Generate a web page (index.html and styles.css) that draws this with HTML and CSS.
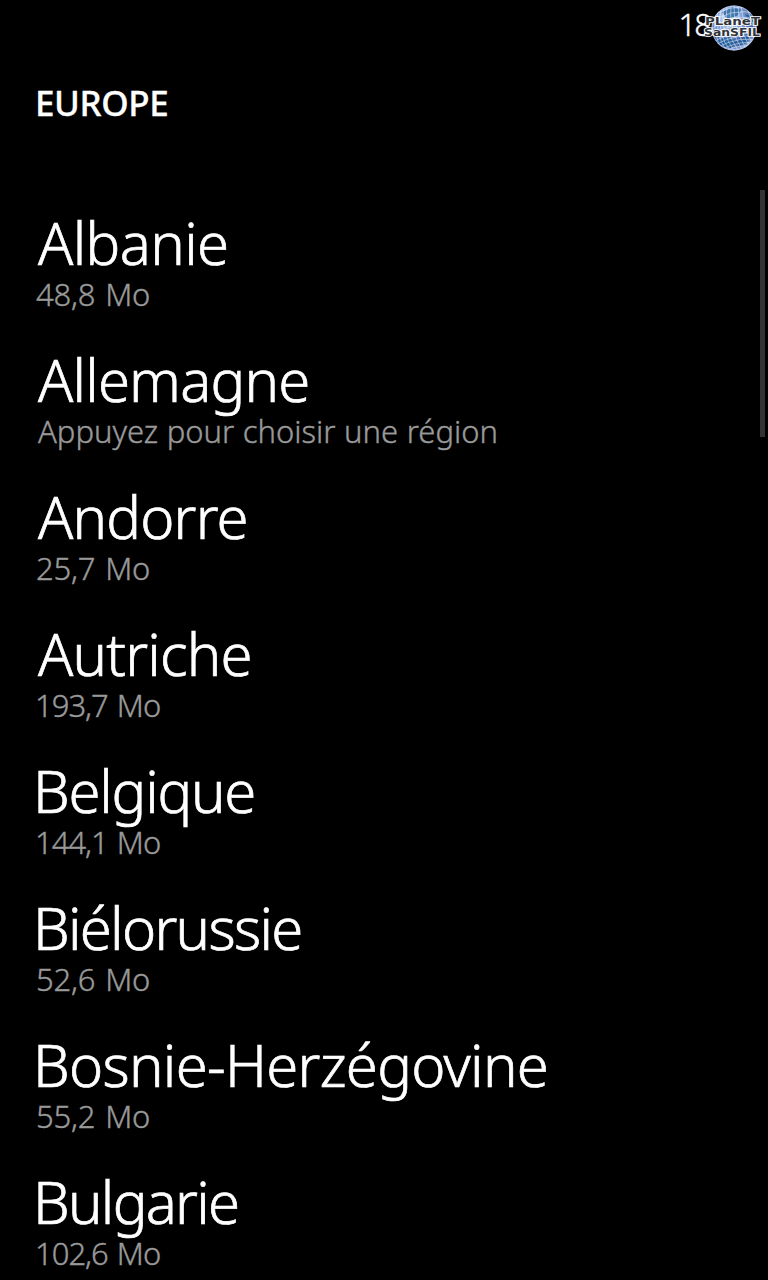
FILE: index.html
```html
<!DOCTYPE html>
<html lang="fr">
<head>
<meta charset="utf-8">
<title>Europe</title>
<link rel="stylesheet" href="styles.css">
</head>

<body>
<div class="status">
  <span class="clock">18</span>
  <svg class="logo" width="64" height="52" viewBox="0 0 64 52">
    <defs>
      <radialGradient id="globe" cx="38%" cy="28%" r="75%">
        <stop offset="0" stop-color="#dbe8fb"/>
        <stop offset="0.4" stop-color="#7f9fd6"/>
        <stop offset="0.8" stop-color="#34589a"/>
        <stop offset="1" stop-color="#a9bdec"/>
      </radialGradient>
      <clipPath id="round"><circle cx="34" cy="28" r="22.5"/></clipPath>
    </defs>
    <circle cx="34" cy="28" r="22.5" fill="url(#globe)"/>
    <g clip-path="url(#round)" fill="none">
      <path d="M22 12l10-5 9 3-4 6-10 3zM45 14l8 3 3 9-7-4zM17 40l12-3 8 5-6 6-9-2zM39 40l10-4-2 7-9 4z" fill="#1a5c98" opacity=".75"/>
      <g stroke="#f4f8ff" stroke-width=".7" opacity=".75">
        <path d="M8 16Q27 -1 50 6M8 20Q29 2 54 9M8 25Q31 6 58 14M8 31Q34 11 60 20M9 37Q36 18 61 27M11 43Q38 27 61 34M13 46Q39 31 60 38M16 48Q40 35 60 41M20 50Q41 39 59 44M25 51Q41 43 57 47"/>
        <path d="M15 12Q12 34 23 52M18 9Q14 33 27 52M21 7Q16 33 31 52M24 6Q19 31 35 52M27 5Q23 29 39 52M31 5Q28 28 43 51M34 4Q33 26 46 49M38 5Q38 25 49 46M41 5Q43 24 52 43M47 8Q52 22 57 35"/>
      </g>
    </g>
    <circle cx="34" cy="28" r="22" fill="none" stroke="#c3d2f7" opacity=".7"/>
    <text class="logo-text" x="5" y="25" textLength="55" lengthAdjust="spacingAndGlyphs">PLaneT</text>
    <text class="logo-text" x="4" y="36" textLength="56" lengthAdjust="spacingAndGlyphs">SanSFIL</text>
  </svg>
</div>

<h1>EUROPE</h1>

<ul class="list">
  <li class="a wide"><h2>Albanie</h2><p>48,8 Mo</p></li>
  <li class="a"><h2>Allemagne</h2><p class="hint">Appuyez pour choisir une région</p></li>
  <li class="a"><h2>Andorre</h2><p>25,7 Mo</p></li>
  <li class="a"><h2>Autriche</h2><p class="one">193,7 Mo</p></li>
  <li class="b"><h2>Belgique</h2><p class="one">144,1 Mo</p></li>
  <li class="b narrow"><h2>Biélorussie</h2><p>52,6 Mo</p></li>
  <li class="b wide"><h2>Bosnie-Herzégovine</h2><p>55,2 Mo</p></li>
  <li class="b narrow"><h2>Bulgarie</h2><p class="one">102,6 Mo</p></li>
</ul>
<div class="scrollbar"></div>
</body>
</html>
```
FILE: styles.css
```css
body {
  margin: 0;
  height: 1280px;
  overflow: hidden;
  position: relative;
  background: #000;
  color: #fff;
  font-family: "Noto Sans", "Open Sans", sans-serif;
}
h1, h2, p, ul { margin: 0; padding: 0; }

.status { height: 56px; display: flex; justify-content: flex-end; position: relative; }
.clock { font-size: 31px; font-weight: 300; line-height: 48px; letter-spacing: -2px; margin-right: 58px; -webkit-text-stroke: 0.4px #fff; }
.logo { position: absolute; top: 0; right: 4px; }
.logo-text {
  font-family: "DejaVu Sans", sans-serif;
  font-size: 10px;
  font-weight: bold;
  fill: #30343c;
  stroke: #fff;
  stroke-width: 1.7px;
  paint-order: stroke;
}

h1 { padding-left: 35px; margin-top: 23px; font-size: 35px; line-height: 48px; font-weight: 500; letter-spacing: -0.4px; -webkit-text-stroke: 0.3px #fff; }

.list { list-style: none; padding: 82px 0 0 36px; }
.list li { height: 137px; }
h2 { font-size: 58px; line-height: 68px; font-weight: 300; letter-spacing: -0.8px; white-space: nowrap; -webkit-text-stroke: 0.7px #fff; }
.a h2 { margin-left: 2px; }
.b h2 { margin-left: -3px; letter-spacing: -1.2px; }
.wide h2 { letter-spacing: -0.6px; }
.b.wide h2 { letter-spacing: -0.7px; }
.narrow h2 { letter-spacing: -1.7px; }
p { margin-top: -1px; font-size: 31px; line-height: 36px; font-weight: 300; letter-spacing: -0.2px; word-spacing: 2px; color: #999; white-space: nowrap; -webkit-text-stroke: 0.4px #999; }
.one { margin-left: -1px; letter-spacing: -1px; }
.hint { margin-left: 2px; letter-spacing: 0; word-spacing: 0.5px; }

.scrollbar { position: absolute; top: 190px; right: 3px; width: 5px; height: 247px; background: #333; }
```
